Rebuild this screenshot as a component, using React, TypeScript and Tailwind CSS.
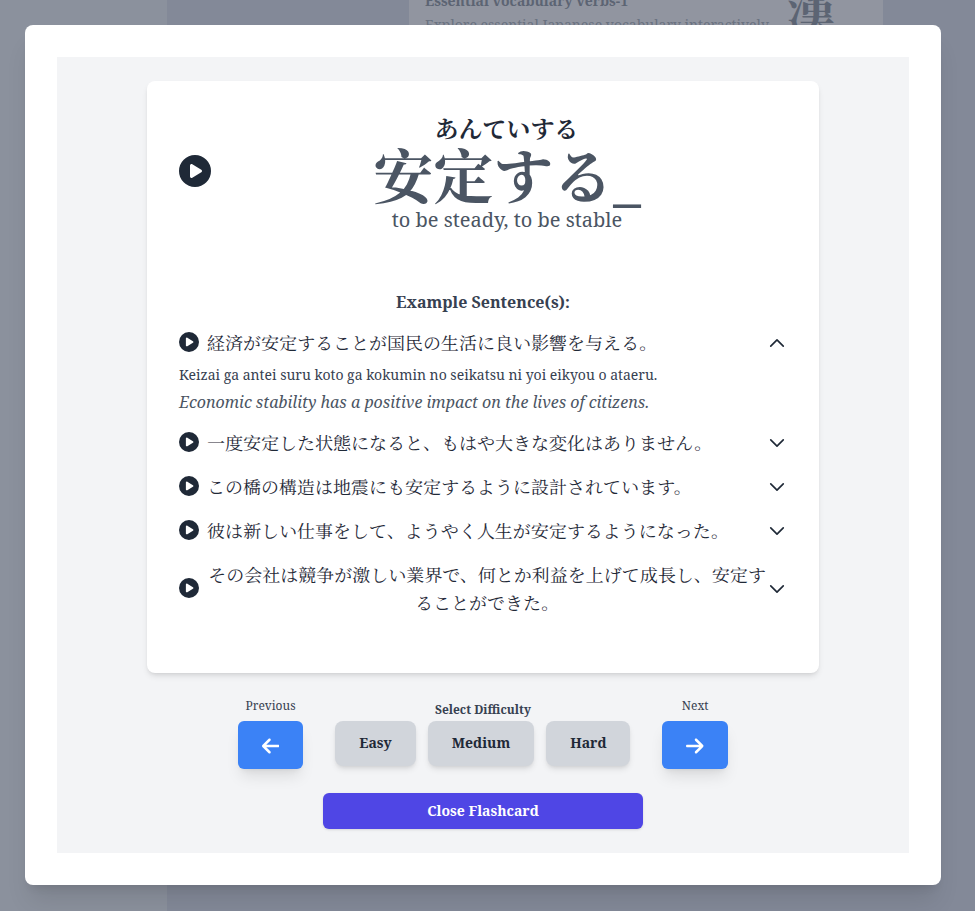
import React, { useState } from "react";
import { FaArrowLeft, FaArrowRight, FaCirclePlay } from "react-icons/fa6";

const sentences = [
  {
    jp: "経済が安定することが国民の生活に良い影響を与える。",
    romaji: "Keizai ga antei suru koto ga kokumin no seikatsu ni yoi eikyou o ataeru.",
    en: "Economic stability has a positive impact on the lives of citizens.",
  },
  { jp: "一度安定した状態になると、もはや大きな変化はありません。" },
  { jp: "この橋の構造は地震にも安定するように設計されています。" },
  { jp: "彼は新しい仕事をして、ようやく人生が安定するようになった。" },
  { jp: "その会社は競争が激しい業界で、何とか利益を上げて成長し、安定することができた。" },
];

function Chevron({ up }: { up: boolean }) {
  return (
    <svg
      viewBox="0 0 24 24"
      fill="none"
      stroke="currentColor"
      strokeWidth="2"
      strokeLinecap="round"
      strokeLinejoin="round"
      className="h-5 w-5 shrink-0 text-[#1f2937]"
    >
      <path d={up ? "M4.5 15.75l7.5-7.5 7.5 7.5" : "M19.5 8.25l-7.5 7.5-7.5-7.5"} />
    </svg>
  );
}

function Backdrop() {
  return (
    <div className="absolute inset-0 flex bg-[#838998]">
      <div className="w-[167px] bg-[#8b919d]" />
      <div className="ml-[242px] flex h-[60px] w-[474px] justify-between bg-[#9195a0] px-4 text-[#5c6473]">
        <div className="-mt-[9px]">
          <div className="text-sm leading-5 font-bold">Essential vocabulary verbs-1</div>
          <div className="mt-1 text-sm leading-5 text-[#6a7280]">
            Explore essential Japanese vocabulary interactively
          </div>
        </div>
        <div className="-mt-3 mr-8 text-5xl leading-none font-bold">漢</div>
      </div>
    </div>
  );
}

export default function App() {
  const [open, setOpen] = useState(0);
  return (
    <div className="relative h-[911px] w-[975px] overflow-hidden font-['Noto_Serif','Noto_Serif_SC','Noto_Serif_CJK_SC','Noto_Sans_CJK_JP',serif]">
      <Backdrop />
      <div className="relative mt-[25px] ml-[25px] h-[860px] w-[916px] rounded-lg bg-white p-8 shadow-xl">
        <div className="flex h-[796px] flex-col items-center bg-[#f3f4f6] pt-6">
          <div className="h-[592px] w-[672px] rounded-lg bg-white px-8 pt-8 text-center shadow-md">
            <div className="flex h-[121px] items-center">
              <FaCirclePlay className="mb-1.5 h-8 w-8 shrink-0 text-[#1f2937]" />
              <div className="ml-4 flex-1">
                <div className="-mt-px mb-px pr-px text-2xl leading-8 font-bold text-[#1f2937]">
                  あんていする
                </div>
                <div className="text-6xl leading-[60px] font-bold text-[#4b5563]">安定する_</div>
                <div className="text-xl leading-7 text-[#4b5563]">to be steady, to be stable</div>
              </div>
            </div>
            <div className="mt-14 leading-6 font-bold text-[#374151]">Example Sentence(s):</div>
            <div className="mt-[15px] flex flex-col gap-4">
              {sentences.map((s, i) => (
                <div key={i}>
                  <button
                    className="flex w-full items-center justify-between text-[#1f2937]"
                    onClick={() => setOpen(open === i ? -1 : i)}
                  >
                    <span className="flex items-center">
                      <FaCirclePlay className="mr-2 mb-0.5 h-5 w-5 shrink-0" />
                      <span className="text-lg leading-7">{s.jp}</span>
                    </span>
                    <Chevron up={open === i} />
                  </button>
                  {open === i && s.romaji && (
                    <div className="-mb-px text-left">
                      <div className="mt-2 text-sm leading-5 text-[#374151]">{s.romaji}</div>
                      <div className="mt-[5px] leading-6 text-[#4b5563] italic">{s.en}</div>
                    </div>
                  )}
                </div>
              ))}
            </div>
          </div>
          <div className="mt-6 mr-[0.2px] flex h-[72px] gap-8">
            <div className="flex flex-col items-center">
              <div className="mt-px mb-[7px] text-xs leading-4 text-[#374151]">Previous</div>
              <button className="flex h-12 items-center rounded-md bg-[#3b82f6] px-6 pt-0.5 text-white shadow-lg">
                <FaArrowLeft className="h-5 w-[17.5px]" />
              </button>
            </div>
            <div className="flex flex-col items-center">
              <div className="mt-[5px] mb-[3px] text-xs leading-4 font-bold text-[#374151]">
                Select Difficulty
              </div>
              <div className="flex gap-3 text-sm font-bold text-[#1f2937]">
                <button className="h-[44.5px] rounded-lg bg-[#d1d5db] px-6 pb-px shadow-md">Easy</button>
                <button className="h-[44.5px] rounded-lg bg-[#d1d5db] px-6 pb-px shadow-md">Medium</button>
                <button className="h-[44.5px] rounded-lg bg-[#d1d5db] px-6 pb-px shadow-md">Hard</button>
              </div>
            </div>
            <div className="flex flex-col items-center">
              <div className="mt-px mb-[7px] text-xs leading-4 text-[#374151]">Next</div>
              <button className="flex h-12 items-center rounded-md bg-[#3b82f6] px-6 pt-0.5 text-white shadow-lg">
                <FaArrowRight className="h-5 w-[17.5px]" />
              </button>
            </div>
          </div>
          <button className="mt-6 h-9 w-80 rounded-md bg-[#4f46e5] text-sm leading-5 font-bold text-white shadow-sm">
            Close Flashcard
          </button>
        </div>
      </div>
    </div>
  );
}
